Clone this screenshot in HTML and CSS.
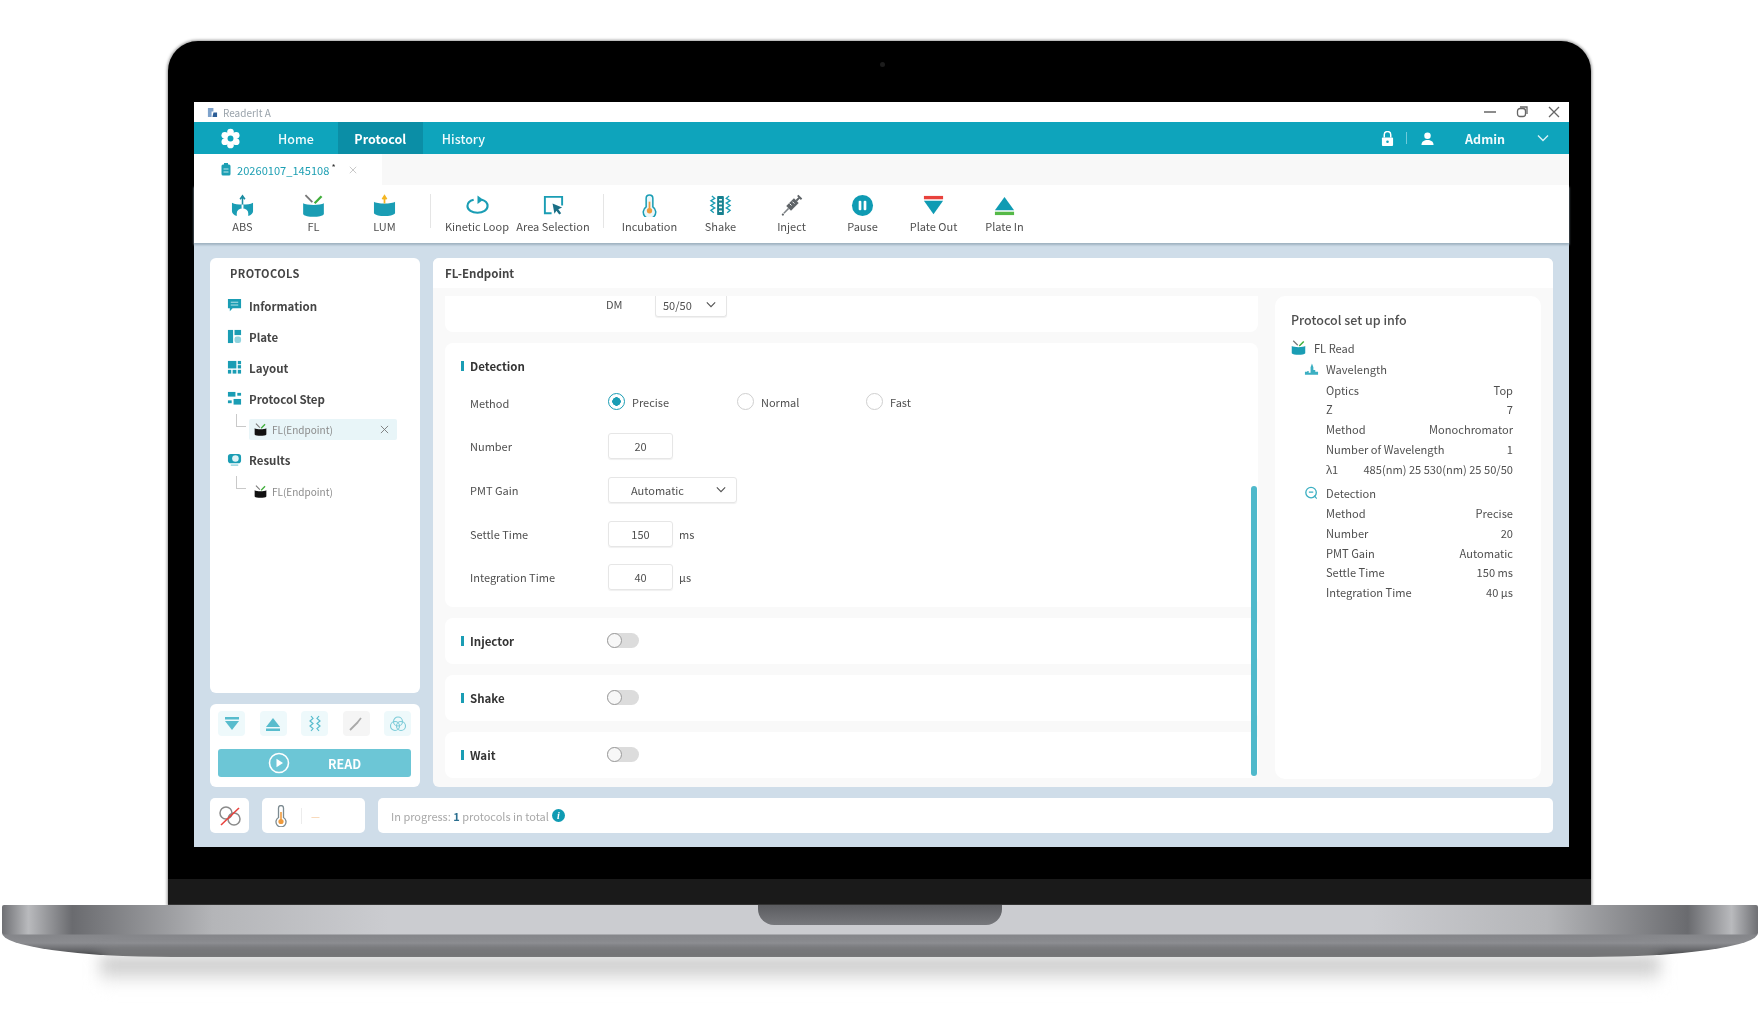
FILE: index.html
```html
<!DOCTYPE html>
<html lang="en">
<head>
    <meta charset="UTF-8">
    <title>ReaderIt A</title>
    <link rel="stylesheet" href="styles.css">
</head>
<body>
<svg class="sprite">
    <symbol id="cup-fl" viewBox="0 0 20 20"><path d="M1 8c3 2 15 2 18 0v9.500c-2 3-16 3-18 0z"/><path d="M3 1l6 6" stroke="#777" stroke-width="1.600"/><path d="M11 8l6-6" stroke="#3fae3a" stroke-width="2"/></symbol>
    <symbol id="cross" viewBox="0 0 10 10"><path d="M1 1l8 8M9 1L1 9" fill="none" stroke="currentColor" stroke-width="1"/></symbol>
    <symbol id="chev" viewBox="0 0 12 8"><path d="M1 1.500l5 5 5-5" fill="none" stroke="currentColor" stroke-width="1.400"/></symbol>
    <symbol id="thermo" viewBox="0 0 14 22"><path d="M4.500 3a2.500 2.500 0 0 1 5 0v9.500a5 5 0 1 1-5 0z" fill="#fff" stroke="#7c8a90" stroke-width="1.300"/><path d="M7 7v8" stroke="#ef9a3c" stroke-width="1.600"/><circle cx="7" cy="16.500" r="2.600" fill="#ef9a3c"/></symbol>
</svg>

<div class="lid">
    <div class="lid-top"><span class="camera"></span></div>
    <div class="screen">
        <div class="titlebar">
            <svg class="app-logo" viewBox="0 0 12 12"><path d="M1 1h6v4H5v6H1z" fill="#7fa3cc"/><path d="M7 6h4v5H6z" fill="#2b5d96"/></svg>
            <span class="app-name">ReaderIt A</span>
            <span class="win-btns">
                <svg viewBox="0 0 12 12"><path d="M0 6h12" stroke="#666" stroke-width="1.500"/></svg>
                <svg viewBox="0 0 12 12"><rect x="1.500" y="2.500" width="8" height="8" rx="2.500" fill="none" stroke="#666" stroke-width="1.300"/><path d="M4 1h7v7" fill="none" stroke="#666" stroke-width="1.300"/></svg>
                <svg viewBox="0 0 12 12"><path d="M1 1l10 10M11 1L1 11" stroke="#666" stroke-width="1.300"/></svg>
            </span>
        </div>

        <div class="nav">
            <span class="nav-gear">
                <svg viewBox="0 0 20 20"><g fill="#fff"><circle cx="10" cy="3.800" r="3.200"/><circle cx="10" cy="16.200" r="3.200"/><circle cx="4.600" cy="6.900" r="3.200"/><circle cx="15.400" cy="6.900" r="3.200"/><circle cx="4.600" cy="13.100" r="3.200"/><circle cx="15.400" cy="13.100" r="3.200"/><circle cx="10" cy="10" r="6"/></g><circle cx="10" cy="10" r="2.800" fill="#0ea4bc"/></svg>
            </span>
            <a class="nav-item nav-home">Home</a>
            <a class="nav-item nav-active">Protocol</a>
            <a class="nav-item">History</a>
            <span class="nav-right">
                <svg class="nav-lock" viewBox="0 0 14 16"><path d="M3.500 7V4a3.500 3.500 0 0 1 7 0v3" fill="none" stroke="#fff" stroke-width="1.600"/><rect x="1" y="7" width="12" height="9" rx="1" fill="#fff"/><circle cx="7" cy="11.500" r="1.400" fill="#0ea4bc"/></svg>
                <span class="nav-sep"></span>
                <svg class="nav-user" viewBox="0 0 14 14"><circle cx="7" cy="4" r="3.500" fill="#fff"/><path d="M0.500 14c0-4 3-5.500 6.500-5.500s6.500 1.500 6.500 5.500z" fill="#fff"/></svg>
                <span class="nav-admin">Admin</span>
                <svg class="nav-chev"><use href="#chev"/></svg>
            </span>
        </div>

        <div class="tabs">
            <div class="tab">
                <svg class="tab-icon" viewBox="0 0 10 13"><rect x="0.500" y="1.500" width="9" height="11" rx="1.500" fill="#1d9fb3"/><rect x="3" y="0" width="4" height="2.500" fill="#1d9fb3"/><path d="M2.500 6h5M2.500 9h5" stroke="#bfe6ec"/></svg>
                <span class="tab-name">20260107_145108</span><sup class="tab-dot">*</sup>
                <svg class="tab-close"><use href="#cross"/></svg>
            </div>
        </div>

        <div class="toolbar">
            <div class="tool">
                <svg viewBox="0 0 24 24"><path d="M1 9c3 1.500 6 2 11 2s8-.5 11-2v9c0 2-2 4-5 5v-3a6 5 0 0 0-12 0v3c-3-1-5-3-5-5z" fill="#1a9db4"/><path d="M12 15V3M9.500 5.500L12 2l2.500 3.500" fill="none" stroke="#1a8ba1" stroke-width="1.600"/><path d="M12 11v5" stroke="#fff" stroke-width="2"/></svg>
                <span>ABS</span>
            </div>
            <div class="tool">
                <svg class="cup-teal"><use href="#cup-fl"/></svg>
                <span>FL</span>
            </div>
            <div class="tool">
                <svg viewBox="0 0 24 24"><path d="M1 8c3 2.500 19 2.500 22 0v12c-3 4-19 4-22 0z" fill="#1a9db4"/><path d="M12 10V3M9.800 5.500L12 2l2.200 3.500" fill="none" stroke="#f4b622" stroke-width="1.800"/></svg>
                <span>LUM</span>
            </div>
            <span class="tool-sep tool-sep-a"></span>
            <div class="tool tool-loop">
                <svg viewBox="0 0 24 24"><path d="M8 6C4 7 1.500 9.500 1.500 12.500c0 4 4.700 7 10.500 7s10.500-3 10.500-7c0-3-2.500-5.500-6-6.500" fill="none" stroke="#1a9db4" stroke-width="2.200"/><path d="M12 1.500l6 4.500-6 4.500z" fill="#1a9db4"/></svg>
                <span>Kinetic Loop</span>
            </div>
            <div class="tool tool-area">
                <svg viewBox="0 0 24 24"><path d="M10 20H3V3h18v9" fill="none" stroke="#1a9db4" stroke-width="2"/><path d="M11 10l10 4-4 2 3 4-2 1.500-3-4-2 3z" fill="#1a6f86"/></svg>
                <span>Area Selection</span>
            </div>
            <span class="tool-sep tool-sep-b"></span>
            <div class="tool">
                <svg viewBox="0 0 24 24"><path d="M8.500 4.500a3.500 3.500 0 0 1 7 0v9a6.500 6.500 0 1 1-7 0z" fill="#eaf7fa" stroke="#1a9db4" stroke-width="1.600"/><path d="M12 8v9" stroke="#ef9a3c" stroke-width="1.800"/><circle cx="12" cy="17.500" r="2.800" fill="#ef9a3c"/></svg>
                <span>Incubation</span>
            </div>
            <div class="tool">
                <svg viewBox="0 0 24 24"><rect x="8.500" y="2" width="7" height="20" rx="1" fill="#17808f"/><path d="M10.500 6h3M10.500 10h3M10.500 14h3M10.500 18h3" stroke="#fff" stroke-width="1.800"/><path d="M3 2l3 2.500-4 2.500 4 2.500-4 2.500 4 2.500-4 2.500 3 2.500M21 2l-3 2.500 4 2.500-4 2.500 4 2.500-4 2.500 4 2.500-3 2.500" fill="none" stroke="#1a9db4" stroke-width="1.400"/></svg>
                <span>Shake</span>
            </div>
            <div class="tool">
                <svg viewBox="0 0 24 24"><path d="M9 15l8-8" stroke="#5f6468" stroke-width="7"/><path d="M17 7l4-4M18.500 1.500l4 4" stroke="#5f6468" stroke-width="2"/><path d="M9 15l-5 5" stroke="#7d8286" stroke-width="1.500"/><circle cx="3" cy="21.500" r="1.200" fill="#5f6468"/><path d="M10 10l2 2M13 8l2 2" stroke="#fff"/></svg>
                <span>Inject</span>
            </div>
            <div class="tool">
                <svg viewBox="0 0 24 24"><circle cx="12" cy="12" r="11" fill="#0f9bb3"/><rect x="8" y="7" width="2.800" height="10" rx="1.200" fill="#fff"/><rect x="13.200" y="7" width="2.800" height="10" rx="1.200" fill="#fff"/></svg>
                <span>Pause</span>
            </div>
            <div class="tool">
                <svg viewBox="0 0 24 24"><rect x="2" y="2" width="20" height="3.500" fill="#e8413c"/><path d="M2 7h20L12 21z" fill="#0f9bb3"/></svg>
                <span>Plate Out</span>
            </div>
            <div class="tool">
                <svg viewBox="0 0 24 24"><path d="M12 3l10 14H2z" fill="#0f9bb3"/><rect x="2" y="18.500" width="20" height="3.500" fill="#55b947"/></svg>
                <span>Plate In</span>
            </div>
        </div>

        <div class="content">
            <div class="work">
                <div class="side">
                    <div class="side-list">
                        <h3 class="side-title">PROTOCOLS</h3>
                        <div class="side-item">
                            <svg viewBox="0 0 16 16"><path d="M1 1h14v10H6l-3 3v-3H1z" fill="#1a9db4"/><path d="M4 4.500h8M4 7.500h8" stroke="#bfe6ec"/></svg>
                            <span>Information</span>
                        </div>
                        <div class="side-item">
                            <svg viewBox="0 0 16 16"><rect x="1" y="1" width="5.500" height="14" fill="#1a9db4"/><rect x="8" y="1" width="7" height="5.500" fill="#1a9db4"/><rect x="8" y="8" width="7" height="7" rx="2.500" fill="#8fd3de"/></svg>
                            <span>Plate</span>
                        </div>
                        <div class="side-item">
                            <svg viewBox="0 0 16 16"><g fill="#1a9db4"><rect x="1" y="1" width="9" height="8"/><rect x="11.500" y="1" width="3.500" height="3.500"/><rect x="11.500" y="5.500" width="3.500" height="3.500"/><rect x="1" y="10.500" width="3.500" height="4"/><rect x="6" y="10.500" width="4" height="4"/><rect x="11.500" y="10.500" width="3.500" height="4"/></g></svg>
                            <span>Layout</span>
                        </div>
                        <div class="side-item">
                            <svg viewBox="0 0 16 16"><g fill="#1a9db4"><rect x="1" y="1" width="8" height="5"/><rect x="11" y="2" width="4" height="3"/><rect x="1" y="10" width="4" height="3"/><rect x="7" y="8.500" width="8" height="6"/></g></svg>
                            <span>Protocol Step</span>
                        </div>
                        <div class="side-sub side-sub-active">
                            <i class="tree"></i>
                            <div class="sub-box">
                                <svg class="cup-dark"><use href="#cup-fl"/></svg>
                                <span>FL(Endpoint)</span>
                                <svg class="sub-close"><use href="#cross"/></svg>
                            </div>
                        </div>
                        <div class="side-item side-results">
                            <svg viewBox="0 0 16 16"><rect x="1" y="2" width="14" height="10" rx="3" fill="#1a9db4"/><circle cx="9" cy="7" r="3.500" fill="#dff3f6"/><path d="M4 14h8" stroke="#8fd3de" stroke-width="1.500"/></svg>
                            <span>Results</span>
                        </div>
                        <div class="side-sub side-sub-last">
                            <i class="tree"></i>
                            <div class="sub-box">
                                <svg class="cup-dark"><use href="#cup-fl"/></svg>
                                <span>FL(Endpoint)</span>
                            </div>
                        </div>
                    </div>
                    <div class="side-actions">
                        <div class="quick">
                            <span class="quick-btn"><svg viewBox="0 0 18 18"><rect x="2" y="2" width="14" height="2.500" fill="#58bccd"/><path d="M2 6h14l-7 9z" fill="#58bccd"/></svg></span>
                            <span class="quick-btn"><svg viewBox="0 0 18 18"><path d="M9 3l7 9H2z" fill="#58bccd"/><rect x="2" y="13.500" width="14" height="2.500" fill="#58bccd"/></svg></span>
                            <span class="quick-btn"><svg viewBox="0 0 18 18"><path d="M5 1l2 2.500-3 2.500 3 2.500-3 2.500 3 2.500-2 2.500M13 1l-2 2.500 3 2.500-3 2.500 3 2.500-3 2.500 2 2.500" fill="none" stroke="#58bccd" stroke-width="1.200"/></svg></span>
                            <span class="quick-btn quick-off"><svg viewBox="0 0 18 18"><path d="M3 15l8-8M10 8l4-5" stroke="#a9a9a9" stroke-width="1.800"/></svg></span>
                            <span class="quick-btn"><svg viewBox="0 0 18 18"><g fill="none" stroke="#7ccbd8" stroke-width="1.100"><circle cx="9" cy="6.500" r="4.500"/><circle cx="6" cy="11" r="4.500"/><circle cx="12" cy="11" r="4.500"/></g></svg></span>
                        </div>
                        <button class="read-btn">
                            <svg viewBox="0 0 22 22"><circle cx="11" cy="11" r="9.500" fill="none" stroke="#fff" stroke-width="1.600"/><path d="M8.500 6.800l6.500 4.200-6.500 4.200z" fill="#fff"/></svg>
                            <span>READ</span>
                        </button>
                    </div>
                </div>

                <div class="main">
                    <div class="main-title">FL-Endpoint</div>
                    <div class="main-body">
                        <div class="sections">
                            <div class="card card-dm">
                                <span class="dm-label">DM</span>
                                <span class="field field-dm">50/50<svg class="field-chev"><use href="#chev"/></svg></span>
                            </div>
                            <div class="card card-detect">
                                <div class="sec-head">Detection</div>
                                <div class="form-row">
                                    <label>Method</label>
                                    <span class="radio radio-on"></span><span class="radio-text">Precise</span>
                                    <span class="radio"></span><span class="radio-text">Normal</span>
                                    <span class="radio"></span><span class="radio-text">Fast</span>
                                </div>
                                <div class="form-row">
                                    <label>Number</label>
                                    <span class="field field-num">20</span>
                                </div>
                                <div class="form-row">
                                    <label>PMT Gain</label>
                                    <span class="field field-sel">Automatic<svg class="field-chev"><use href="#chev"/></svg></span>
                                </div>
                                <div class="form-row">
                                    <label>Settle Time</label>
                                    <span class="field field-num">150</span><span class="unit">ms</span>
                                </div>
                                <div class="form-row">
                                    <label>Integration Time</label>
                                    <span class="field field-num">40</span><span class="unit">µs</span>
                                </div>
                            </div>
                            <div class="card card-toggle"><div class="sec-head">Injector</div><span class="toggle"></span></div>
                            <div class="card card-toggle"><div class="sec-head">Shake</div><span class="toggle"></span></div>
                            <div class="card card-toggle"><div class="sec-head">Wait</div><span class="toggle"></span></div>
                        </div>
                        <div class="scrollbar"></div>
                        <div class="info">
                            <h4 class="info-title">Protocol set up info</h4>
                            <div class="info-read">
                                <svg class="cup-teal"><use href="#cup-fl"/></svg>
                                <span>FL Read</span>
                            </div>
                            <div class="info-head">
                                <svg viewBox="0 0 16 14"><path d="M1 13V10h2.500v-1H5v2h2V5l1.500-4L10 5v3h2v2h3v3z" fill="#3bafc2"/></svg>
                                <span>Wavelength</span>
                            </div>
                            <div class="info-row"><span>Optics</span><span>Top</span></div>
                            <div class="info-row"><span>Z</span><span>7</span></div>
                            <div class="info-row"><span>Method</span><span>Monochromator</span></div>
                            <div class="info-row"><span>Number of Wavelength</span><span>1</span></div>
                            <div class="info-row"><span>λ1</span><span>485(nm) 25 530(nm) 25 50/50</span></div>
                            <div class="info-head info-head-gap">
                                <svg viewBox="0 0 16 16"><circle cx="7.500" cy="7.500" r="6" fill="none" stroke="#3bafc2" stroke-width="1.500"/><path d="M11 11l3 3.500M5 7h5" stroke="#3bafc2" stroke-width="1.300"/></svg>
                                <span>Detection</span>
                            </div>
                            <div class="info-row"><span>Method</span><span>Precise</span></div>
                            <div class="info-row"><span>Number</span><span>20</span></div>
                            <div class="info-row"><span>PMT Gain</span><span>Automatic</span></div>
                            <div class="info-row"><span>Settle Time</span><span>150 ms</span></div>
                            <div class="info-row"><span>Integration Time</span><span>40 µs</span></div>
                        </div>
                    </div>
                </div>
            </div>

            <div class="status">
                <div class="status-box status-link">
                    <svg viewBox="0 0 24 22"><g fill="none" stroke="#8a8a8a" stroke-width="1.500"><circle cx="8" cy="8" r="6"/><circle cx="16" cy="14" r="6"/></g><path d="M3 20L21 3" stroke="#e8413c" stroke-width="1.600"/></svg>
                </div>
                <div class="status-box status-temp">
                    <svg><use href="#thermo"/></svg>
                    <i class="temp-sep"></i>
                    <span class="temp-val">—</span>
                </div>
                <div class="status-box status-text">
                    <span>In progress: <b>1</b> protocols in total</span>
                    <span class="info-dot">i</span>
                </div>
            </div>
        </div>
    </div>
    <div class="lid-chin"></div>
    <div class="lid-hinge"></div>
</div>

<div class="base"><span class="notch"></span></div>
<div class="base-shadow"></div>
</body>
</html>
```

FILE: styles.css
```css
html, body {
    margin: 0;
    height: 1030px;
    overflow: hidden;
    background: #fff;
}
body {
    padding-top: 41px;
    box-sizing: border-box;
    font-family: "Noto Sans CJK SC", "Noto Sans", sans-serif;
    color: #4f4f4f;
    font-size: 11px;
}
.sprite { display: none; }

/* laptop */
.lid {
    width: 1423px;
    margin-left: 168px;
    background: #000;
    border-radius: 30px 30px 0 0;
    box-shadow: 0 0 3px 1px #9a9a9a;
    padding: 0 21px 0 26px;
    box-sizing: border-box;
}
.lid-top {
    height: 61px;
    display: flex;
    justify-content: center;
    padding-top: 21px;
    box-sizing: border-box;
}
.camera {
    width: 5px;
    height: 5px;
    border-radius: 50%;
    background: #1c1c1c;
}
.lid-chin { height: 32px; }
.lid-hinge {
    height: 26px;
    background: #1a1a1a;
    margin: 0 -21px 0 -26px;
    border-bottom: 1px solid #333;
    box-sizing: border-box;
}
.base {
    width: 1756px;
    height: 52px;
    margin-left: 2px;
    display: flex;
    justify-content: center;
    border-radius: 2px 2px 170px 170px / 2px 2px 24px 24px;
    background:
        linear-gradient(to bottom, transparent 0, transparent 29px, #85868a 30px, #8b8c90 38px, #5c5d60 47px, #2e2f31 52px),
        linear-gradient(to right, #6f7074 0, #b9babd 1.5%, #6a6b6f 4%, #b4b5b8 12%, #cbccd0 22%, #cbccd0 78%, #b4b5b8 88%, #6a6b6f 96%, #b9babd 98.500%, #6f7074 100%);
}
.notch {
    width: 244px;
    height: 20px;
    background: linear-gradient(to bottom, #5b5c60, #77787c);
    border-radius: 0 0 16px 16px;
}
.base-shadow {
    height: 28px;
    margin: 0 100px;
    background: linear-gradient(to bottom, #b4b4b4, #fff);
    filter: blur(8px);
}

/* app window */
.screen {
    width: 1375px;
    height: 745px;
    display: flex;
    flex-direction: column;
    background: #fff;
    filter: blur(0.5px);
}
.titlebar {
    height: 20px;
    display: flex;
    align-items: center;
    padding: 0 9px 0 13px;
    flex: none;
}
.app-logo { width: 11px; height: 11px; margin-right: 5px; }
.app-name { font-size: 10px; color: #9aa3ab; }
.win-btns { margin-left: auto; display: flex; gap: 20px; align-items: center; }
.win-btns svg { width: 12px; height: 12px; }

.nav {
    height: 32px;
    flex: none;
    background: #0ea4bc;
    display: flex;
    align-items: stretch;
    color: #f0fbfd;
    font-size: 12.500px;
    font-weight: 500;
}
.nav-gear { width: 65px; display: flex; align-items: center; justify-content: center; padding-left: 7px; box-sizing: border-box; }
.nav-gear svg { width: 21px; height: 21px; }
.nav-item { padding: 0 19px; display: flex; align-items: center; }
.nav-home { padding-right: 24px; }
.nav-active { background: #0b8ea6; font-weight: 700; color: #fff; padding: 0 16px; width: 85px; box-sizing: border-box; justify-content: center; }
.nav-right { margin-left: auto; display: flex; align-items: center; padding-right: 20px; }
.nav-lock { width: 13px; height: 15px; }
.nav-sep { width: 1px; height: 12px; background: #6fcbdb; margin: 0 14px 0 12px; }
.nav-user { width: 13px; height: 13px; }
.nav-admin { margin: 0 32px 0 31px; font-weight: 700; }
.nav-chev { width: 12px; height: 8px; color: #d8f2f6; }

.tabs {
    height: 31px;
    flex: none;
    background: #f8f8f8;
    display: flex;
}
.tab {
    width: 188px;
    background: #fff;
    display: flex;
    align-items: center;
    padding-left: 27px;
    box-sizing: border-box;
    color: #1d9fb3;
}
.tab-icon { width: 10px; height: 13px; margin-right: 6px; }
.tab-name { font-size: 11.100px; }
.tab-dot { font-size: 9px; margin: -5px 13px 0 2px; line-height: 1; color: #333; }
.tab-close { width: 8px; height: 8px; color: #bbb; }

.toolbar {
    height: 58px;
    flex: none;
    display: flex;
    align-items: stretch;
    padding-left: 13px;
    box-shadow: 0 2px 2px #9fb2c0;
    position: relative;
    z-index: 1;
}
.tool {
    width: 71px;
    display: flex;
    flex-direction: column;
    align-items: center;
    padding-top: 9px;
    box-sizing: border-box;
    font-size: 11px;
    color: #4f4f4f;
}
.tool svg { width: 23px; height: 23px; flex: none; }
.tool span { margin-top: 1px; line-height: 16px; white-space: nowrap; }
.tool-loop { width: 68px; }
.tool-area { width: 84px; }
.tool-sep { width: 1px; height: 34px; background: #e5e5e5; margin-top: 9px; flex: none; }
.tool-sep-a { margin-left: 10px; margin-right: 12px; }
.tool-sep-b { margin-left: 8px; margin-right: 10px; }

.content {
    flex: 1;
    min-height: 0;
    background: #cfdde9;
    padding: 15px 16px 14px;
    display: flex;
    flex-direction: column;
    gap: 11px;
}
.work { flex: 1; min-height: 0; display: flex; gap: 13px; }

/* left column */
.side { width: 210px; flex: none; display: flex; flex-direction: column; gap: 11px; }
.side-list {
    flex: 1;
    background: #fff;
    border-radius: 6px;
    padding: 7px 0 0 17px;
}
.side-title {
    margin: 0 0 9px 3px;
    font-size: 11px;
    line-height: 16px;
    font-weight: 700;
    color: #444;
    letter-spacing: 0.4px;
}
.side-item {
    height: 31px;
    display: flex;
    align-items: center;
    gap: 7px;
    font-size: 11.500px;
    font-weight: 700;
    color: #444;
}
.side-item svg { width: 15px; height: 15px; flex: none; }
.side-results { margin-top: 2px; }
.side-sub { height: 26px; margin-top: 2px; display: flex; align-items: center; position: relative; padding-left: 22px; }
.side-sub-last { margin-top: 3px; }
.tree {
    position: absolute;
    left: 9px;
    top: -2px;
    width: 9px;
    height: 12px;
    border-left: 1px solid #c9c9c9;
    border-bottom: 1px solid #c9c9c9;
}
.sub-box {
    width: 148px;
    height: 21px;
    display: flex;
    align-items: center;
    padding-left: 5px;
    box-sizing: border-box;
    gap: 5px;
    border-radius: 2px;
    font-size: 10px;
    color: #8b8b8b;
}
.side-sub-active .sub-box { background: #e8f5f8; }
.sub-close { width: 9px; height: 9px; color: #777; margin-left: auto; margin-right: 8px; }
.cup-dark { width: 13px; height: 13px; fill: #111; }
.cup-teal { fill: #1a9db4; }

.side-actions {
    height: 83px;
    flex: none;
    background: #fff;
    border-radius: 6px;
    padding: 7px 9px 10px 8px;
    box-sizing: border-box;
    display: flex;
    flex-direction: column;
    justify-content: space-between;
}
.quick { display: flex; justify-content: space-between; }
.quick-btn {
    width: 27px;
    height: 25px;
    background: #eef9fb;
    border-radius: 4px;
    display: flex;
    align-items: center;
    justify-content: center;
}
.quick-btn svg { width: 18px; height: 18px; }
.quick-off { background: #f5f5f5; }
.read-btn {
    height: 28px;
    border: 0;
    border-radius: 3px;
    background: #6cc6d6;
    color: #fff;
    font: 700 12.500px "Noto Sans CJK SC", "Noto Sans", sans-serif;
    display: flex;
    align-items: center;
    padding: 0 0 0 50px;
}
.read-btn svg { width: 22px; height: 22px; margin-right: 38px; }

/* main panel */
.main {
    flex: 1;
    min-width: 0;
    background: #f9f9f9;
    border-radius: 6px;
    display: flex;
    flex-direction: column;
    overflow: hidden;
}
.main-title {
    height: 30px;
    flex: none;
    background: #fff;
    padding-left: 12px;
    font-size: 11.500px;
    font-weight: 700;
    line-height: 30px;
    color: #444;
}
.main-body { flex: 1; min-height: 0; display: flex; padding: 8px 12px 8px 12px; }
.sections { width: 813px; flex: none; display: flex; flex-direction: column; gap: 11px; }
.card { background: #fff; border-radius: 8px; }
.card-dm {
    height: 36px;
    flex: none;
    border-radius: 0 0 8px 8px;
    display: flex;
    align-items: flex-start;
    padding-left: 161px;
    box-sizing: border-box;
}
.dm-label { width: 49px; line-height: 17px; }
.card-detect { padding: 14px 0 8px 25px; flex: none; }
.sec-head {
    font-size: 11.500px;
    font-weight: 700;
    line-height: 18px;
    color: #333;
    position: relative;
}
.sec-head::before {
    content: "";
    position: absolute;
    left: -9px;
    top: 4px;
    width: 2.500px;
    height: 10px;
    background: #1a9db4;
}
.form-row { height: 43.600px; display: flex; align-items: center; }
.card-detect .sec-head { margin-bottom: 6px; }
.form-row label { width: 138px; flex: none; }
.field {
    height: 26px;
    border: 1px solid #e6e6e6;
    border-radius: 3px;
    box-sizing: border-box;
    display: flex;
    align-items: center;
    justify-content: center;
    color: #4f4f4f;
    box-shadow: 0 1px 1px #f0f0f0;
}
.field-num { width: 65px; }
.field-sel { width: 129px; justify-content: flex-start; padding-left: 22px; }
.field-dm {
    width: 72px;
    height: 21px;
    border-top: 0;
    border-radius: 0 0 3px 3px;
    justify-content: flex-start;
    padding: 0 0 3px 7px;
}
.field-chev { width: 10px; height: 7px; color: #555; margin-left: auto; margin-right: 10px; }
.unit { margin-left: 6px; }
.radio {
    width: 17px;
    height: 17px;
    border: 1.500px solid #cfcfcf;
    border-radius: 50%;
    box-sizing: border-box;
    flex: none;
    margin-top: -2px;
}
.radio-on {
    border-color: #1a9db4;
    background: radial-gradient(circle, #1a9db4 0, #1a9db4 4px, #fff 4.500px);
}
.radio-text { margin: -2px 0 0 7px; width: 105px; }
.card-toggle {
    height: 46px;
    flex: none;
    display: flex;
    align-items: center;
    padding-left: 25px;
    box-sizing: border-box;
}
.card-toggle .sec-head { width: 137px; }
.toggle {
    width: 32px;
    height: 15px;
    border-radius: 8px;
    background: #dcdcdc;
    position: relative;
}
.toggle::after {
    content: "";
    position: absolute;
    left: 0;
    top: 0;
    width: 15px;
    height: 15px;
    border-radius: 50%;
    box-sizing: border-box;
    border: 1.500px solid #9a9a9a;
    background: #f7f7f7;
}
/* sits over the right edge of the cards */
.scrollbar {
    width: 6px;
    height: 290px;
    flex: none;
    margin: 190px 18px 0 -7px;
    background: #4fb9cb;
    border-radius: 3px;
    z-index: 1;
}
.info {
    width: 266px;
    flex: none;
    background: #fff;
    border-radius: 10px;
    padding: 14px 28px 0 16px;
    box-sizing: border-box;
    font-size: 11.100px;
    color: #4f4f4f;
}
.info-title { margin: 0 0 7px; font-size: 12.500px; font-weight: 500; line-height: 20px; color: #4f4f4f; }
.info-read, .info-head { display: flex; align-items: center; }
.info-read { height: 21px; }
.info-head { height: 22.500px; padding-left: 13px; }
.info-read svg { width: 15px; height: 15px; margin-right: 8px; }
.info-head svg { width: 15px; height: 14px; margin-right: 7px; }
.info-head-gap { margin-top: 2px; }
.info-row { display: flex; justify-content: space-between; height: 19.800px; line-height: 19.800px; padding-left: 35px; }

/* status */
.status { height: 35px; flex: none; display: flex; gap: 13px; }
.status-box {
    background: #fff;
    border-radius: 5px;
    display: flex;
    align-items: center;
}
.status-link { width: 39px; justify-content: center; }
.status-link svg { width: 24px; height: 22px; }
.status-temp { width: 103px; padding-left: 12px; box-sizing: border-box; }
.status-temp svg { width: 14px; height: 22px; }
.temp-sep { width: 1px; height: 16px; background: #ececec; margin: 0 9px 0 13px; }
.temp-val { color: #f5c79a; font-size: 10px; }
.status-text { flex: 1; padding-left: 13px; color: #a8a8a8; }
.status-text b { color: #2b6f8f; font-weight: 700; }
.info-dot {
    width: 13px;
    height: 13px;
    border-radius: 50%;
    background: #0f9bb3;
    color: #fff;
    font: italic 700 10px/13px "Liberation Serif", serif;
    text-align: center;
    margin-left: 3px;
}
```
